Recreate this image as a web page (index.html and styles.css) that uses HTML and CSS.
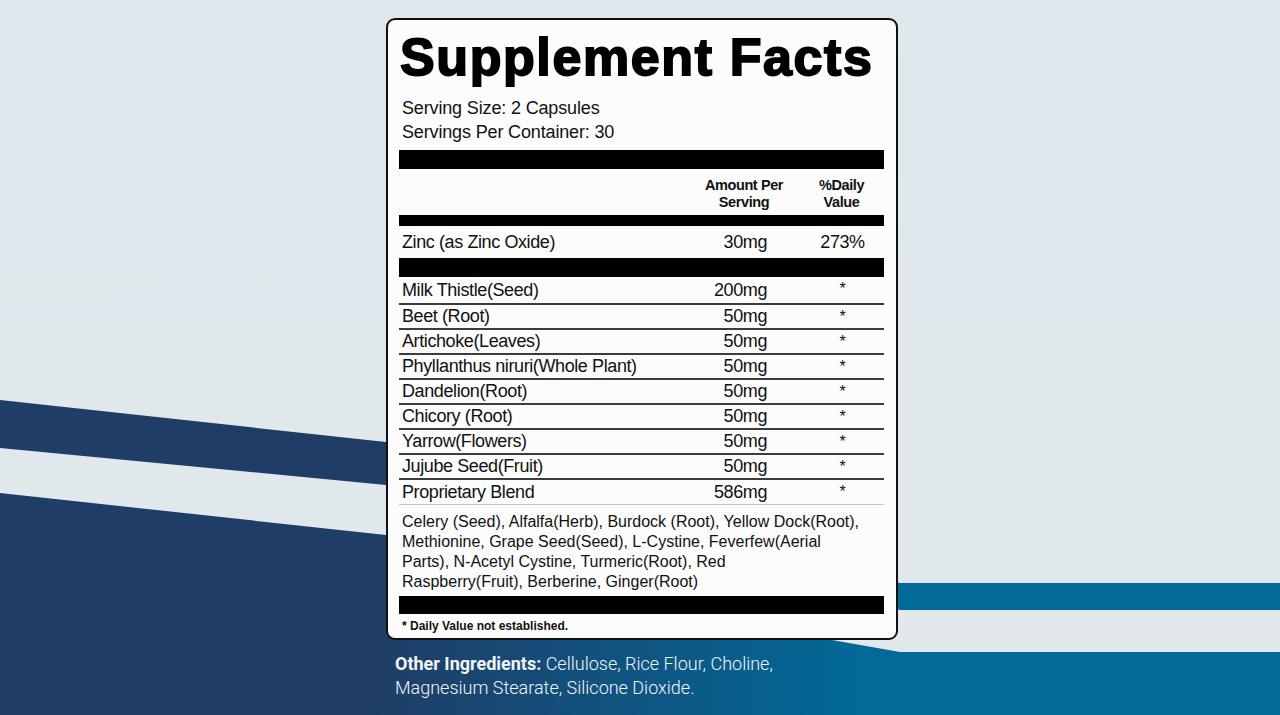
FILE: index.html
```html
<!DOCTYPE html>
<html lang="en">
<head>
<meta charset="utf-8">
<title>Supplement Facts</title>
<link rel="stylesheet" href="styles.css">
</head>
<body>
<main class="page">
  <div class="panel">
    <section class="facts">
      <h1 class="title">Supplement Facts</h1>
      <p class="serving">Serving Size: 2 Capsules</p>
      <p class="serving">Servings Per Container: 30</p>
      <div class="bar bar-thick"></div>
      <div class="head-row">
        <span></span>
        <span class="h-amt">Amount Per<br>Serving</span>
        <span class="h-dv">%Daily<br>Value</span>
      </div>
      <div class="bar bar-mid"></div>
      <div class="row row-zinc">
        <span class="name">Zinc (as Zinc Oxide)</span>
        <span class="amt">30mg</span>
        <span class="dv">273%</span>
      </div>
      <div class="bar bar-thick"></div>
      <div class="ing-list">
        <div class="row ing ing-first"><span class="name">Milk Thistle(Seed)</span><span class="amt">200mg</span><span class="dv star">*</span></div>
        <div class="row ing"><span class="name">Beet (Root)</span><span class="amt">50mg</span><span class="dv star">*</span></div>
        <div class="row ing"><span class="name">Artichoke(Leaves)</span><span class="amt">50mg</span><span class="dv star">*</span></div>
        <div class="row ing"><span class="name">Phyllanthus niruri(Whole Plant)</span><span class="amt">50mg</span><span class="dv star">*</span></div>
        <div class="row ing"><span class="name">Dandelion(Root)</span><span class="amt">50mg</span><span class="dv star">*</span></div>
        <div class="row ing"><span class="name">Chicory (Root)</span><span class="amt">50mg</span><span class="dv star">*</span></div>
        <div class="row ing"><span class="name">Yarrow(Flowers)</span><span class="amt">50mg</span><span class="dv star">*</span></div>
        <div class="row ing"><span class="name">Jujube Seed(Fruit)</span><span class="amt">50mg</span><span class="dv star">*</span></div>
        <div class="row ing ing-last"><span class="name">Proprietary Blend</span><span class="amt">586mg</span><span class="dv star">*</span></div>
      </div>
      <p class="blend">Celery (Seed), Alfalfa(Herb), Burdock (Root), Yellow Dock(Root),<br>Methionine, Grape Seed(Seed), L-Cystine, Feverfew(Aerial<br>Parts), N-Acetyl Cystine, Turmeric(Root), Red<br>Raspberry(Fruit), Berberine, Ginger(Root)</p>
      <div class="bar bar-foot"></div>
      <p class="note">* Daily Value not established.</p>
    </section>
    <p class="other"><strong>Other Ingredients:</strong> Cellulose, Rice Flour, Choline,<br>Magnesium Stearate, Silicone Dioxide.</p>
  </div>
</main>
</body>
</html>
```

FILE: styles.css
```css
html, body {
  margin: 0;
  padding: 0;
}

body {
  width: 1280px;
  height: 715px;
  overflow: hidden;
  background-color: #dfe8ed;
  background-image: url("data:image/svg+xml;utf8,<svg xmlns='http://www.w3.org/2000/svg' width='1280' height='715' viewBox='0 0 1280 715'><defs><linearGradient id='g' gradientUnits='userSpaceOnUse' x1='0' y1='0' x2='1280' y2='0'><stop offset='0.29' stop-color='%231f3d66'/><stop offset='0.68' stop-color='%23016a99'/></linearGradient><linearGradient id='b' x1='0' y1='0' x2='0' y2='1'><stop offset='0' stop-color='%23dde7ec'/><stop offset='1' stop-color='%23e3e9ed'/></linearGradient></defs><rect width='1280' height='715' fill='url(%23b)'/><path d='M0 60 L1280 10 L1280 40 L0 110 Z' fill='%23ffffff' opacity='0.07'/><path d='M0 250 L1280 150 L1280 190 L0 300 Z' fill='%23ffffff' opacity='0.05'/><path d='M0 400 L386 442 Q680 520 900 583 L1280 583 L1280 610 L900 610 Q680 550 386 485 L0 448 Z' fill='url(%23g)'/><path d='M0 493 L386 535 Q650 610 900 652 L1280 652 L1280 715 L0 715 Z' fill='url(%23g)'/></svg>");
  background-repeat: no-repeat;
  font-family: "Liberation Sans", Arial, sans-serif;
  color: #111;
}

.page {
  padding-top: 18px;
}

.panel {
  width: 512px;
  margin-left: 386px;
}

.facts {
  box-sizing: border-box;
  width: 512px;
  background: #fcfcfc;
  border: 2px solid #111;
  border-radius: 9px;
  padding: 7px 12px 0 11px;
}

.title {
  margin: 0;
  font-size: 52px;
  line-height: 60px;
  font-weight: 700;
  letter-spacing: 1.6px;
  -webkit-text-stroke: 1.8px #000;
  color: #000;
  margin-bottom: 9px;
  padding-left: 1px;
}

.serving {
  margin: 0;
  padding-left: 3px;
  font-size: 18px;
  line-height: 24px;
  letter-spacing: -0.15px;
}

.bar {
  background: #000;
}

.bar-thick {
  height: 19px;
  margin-top: 6px;
}

.bar-mid {
  height: 11px;
}

.head-row {
  display: grid;
  grid-template-columns: 1fr 130px 75px;
  padding: 8px 0 5px;
  font-size: 14.5px;
  line-height: 16.5px;
  font-weight: 700;
  letter-spacing: -0.4px;
  text-align: center;
}

.h-dv {
  padding-right: 10px;
}

.row {
  display: grid;
  grid-template-columns: 1fr 92px 117px;
  align-items: center;
  font-size: 18px;
  letter-spacing: -0.4px;
}

.name {
  padding-left: 3px;
  white-space: nowrap;
}

.amt {
  text-align: right;
}

.dv {
  text-align: center;
  padding-left: 34px;
}

.row-zinc {
  height: 32px;
}

.row-zinc + .bar-thick {
  margin-top: 0;
}

.ing {
  box-sizing: border-box;
  height: 25px;
  border-bottom: 2px solid #3c3c3c;
}

.ing-first {
  height: 28px;
}

.ing-last {
  border-bottom: 1px solid #c4c4c4;
}

.star {
  font-size: 16px;
  align-self: start;
  padding-top: 3px;
}

.blend {
  margin: 0;
  padding: 7px 0 4px 3px;
  font-size: 16px;
  line-height: 20px;
  letter-spacing: 0;
}

.bar-foot {
  height: 18px;
}

.note {
  margin: 0;
  padding-left: 3px;
  font-size: 12px;
  line-height: 24px;
  font-weight: 700;
  letter-spacing: 0;
}

.other {
  margin: 12px 0 0 9px;
  font-family: Roboto, "Liberation Sans", sans-serif;
  font-size: 18px;
  line-height: 24px;
  font-weight: 300;
  color: #f2f5f8;
}

.other strong {
  font-weight: 700;
}
```
